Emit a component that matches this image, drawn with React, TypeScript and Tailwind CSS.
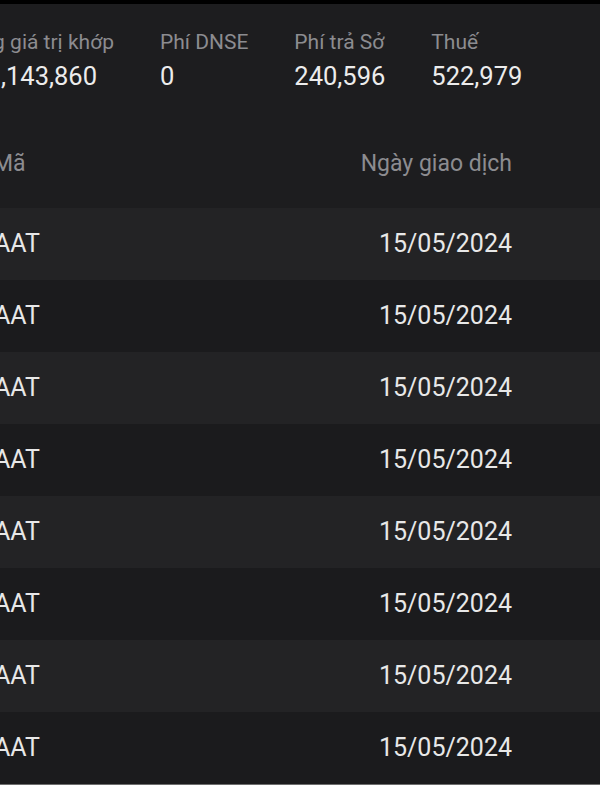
import React from "react";

const summary = [
  { label: "Tổng giá trị khớp", value: "891,143,860" },
  { label: "Phí DNSE", value: "0" },
  { label: "Phí trả Sở", value: "240,596" },
  { label: "Thuế", value: "522,979" },
];

const orders = Array.from({ length: 8 }, (_, i) => ({
  id: i,
  symbol: "AAT",
  date: "15/05/2024",
}));

const App: React.FC = () => {
  return (
    <div className="w-[600px] h-[800px] overflow-hidden bg-white font-['Roboto',sans-serif]">
      <div className="h-[4px] bg-black" />
      <div className="bg-[#1d1d1f]">
        {/* Summary */}
        <div className="flex gap-[46px] -ml-[42px] pt-[24px] pb-[28px]">
          {summary.map((item) => (
            <div key={item.label} className="flex flex-col shrink-0">
              <span className="text-[21px] leading-[28px] text-[#8c8c90]">
                {item.label}
              </span>
              <span className="mt-[4px] text-[25.5px] leading-[32px] text-[#ececec]">
                {item.value}
              </span>
            </div>
          ))}
        </div>

        {/* Table header */}
        <div className="flex items-center justify-between h-[88px] -ml-[7px] pr-[88px]">
          <span className="text-[23px] text-[#8c8c90]">Mã</span>
          <span className="text-[23px] text-[#8c8c90]">Ngày giao dịch</span>
        </div>

        {/* Rows */}
        <div>
          {orders.map((o, i) => (
            <div
              key={o.id}
              className={`flex items-center justify-between h-[72px] -ml-[6px] pr-[88px] ${
                i % 2 === 0 ? "bg-[#232325]" : "bg-[#1b1b1d]"
              }`}
            >
              <span className="text-[25px] text-[#e8e8e8]">{o.symbol}</span>
              <span className="text-[25px] text-[#e8e8e8]">{o.date}</span>
            </div>
          ))}
        </div>
      </div>
      <div className="h-[1px] bg-[#6e6e6e]" />
    </div>
  );
};

export default App;
